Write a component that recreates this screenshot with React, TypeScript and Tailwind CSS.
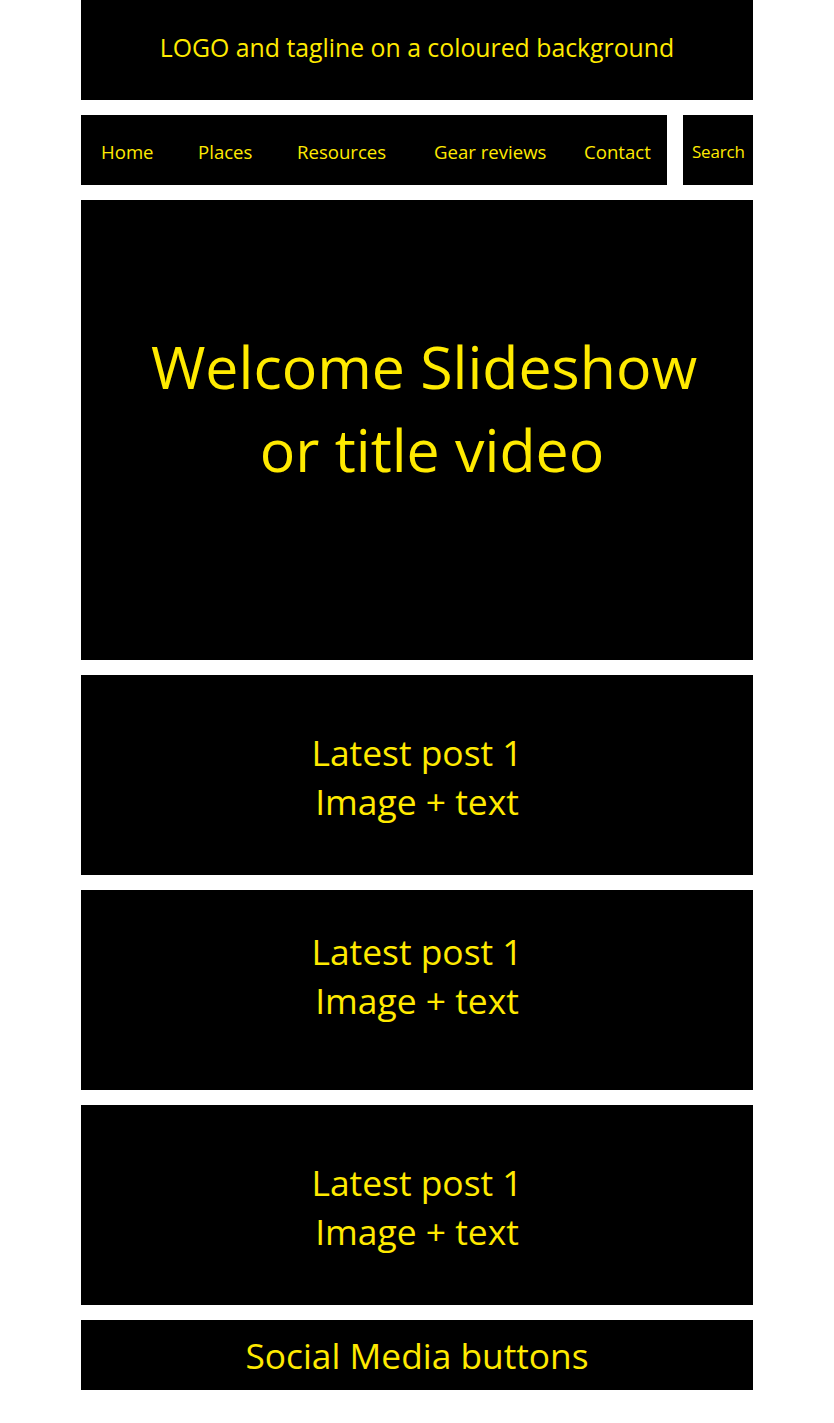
const box = 'bg-black text-[#ffea00] flex items-center justify-center text-center'

const posts = [
  { id: 1, shift: '' },
  { id: 2, shift: 'pb-[32px]' },
  { id: 3, shift: '' },
]

const navItems = [
  { label: 'Home', w: 'w-[97px]' },
  { label: 'Places', w: 'w-[99px]' },
  { label: 'Resources', w: 'w-[137px]' },
  { label: 'Gear reviews', w: 'w-[150px]' },
  { label: 'Contact', w: 'w-auto' },
]

export default function App() {
  return (
    <div className="min-h-[1423px] bg-white" style={{ fontFamily: '"Open Sans", "Noto Sans", sans-serif' }}>
      <div className="mx-auto w-[672px] flex flex-col gap-[15px]">
        <header className={`${box} h-[100px] pb-[4px] text-[24.8px]`}>
          LOGO and tagline on a coloured background
        </header>

        <div className="flex gap-[16px] h-[70px]">
          <nav className="flex-1 bg-black text-[#ffea00] flex items-center pl-[20px] pt-[3px] text-[18.6px]">
            {navItems.map((item) => (
              <span key={item.label} className={`${item.w} whitespace-nowrap`}>{item.label}</span>
            ))}
          </nav>
          <div className="w-[70px] bg-black text-[#ffea00] flex items-center pl-[9px] pt-[3px] text-[17px] tracking-[-0.2px]">
            Search
          </div>
        </div>

        <section className={`${box} h-[460px] pb-[44px] pl-[14px] text-[59px] leading-[83px]`}>
          <div>
            <div>Welcome Slideshow</div>
            <div className="pl-[16px]">or title video</div>
          </div>
        </section>

        {posts.map((p) => (
          <article key={p.id} className={`${box} h-[200px] text-[35.4px] leading-[49px] ${p.shift}`}>
            <div className="pt-[3px]">
              Latest post 1
              <br />
              Image + text
            </div>
          </article>
        ))}

        <footer className={`${box} h-[70px] text-[35.3px]`}>
          Social Media buttons
        </footer>
      </div>
    </div>
  )
}
